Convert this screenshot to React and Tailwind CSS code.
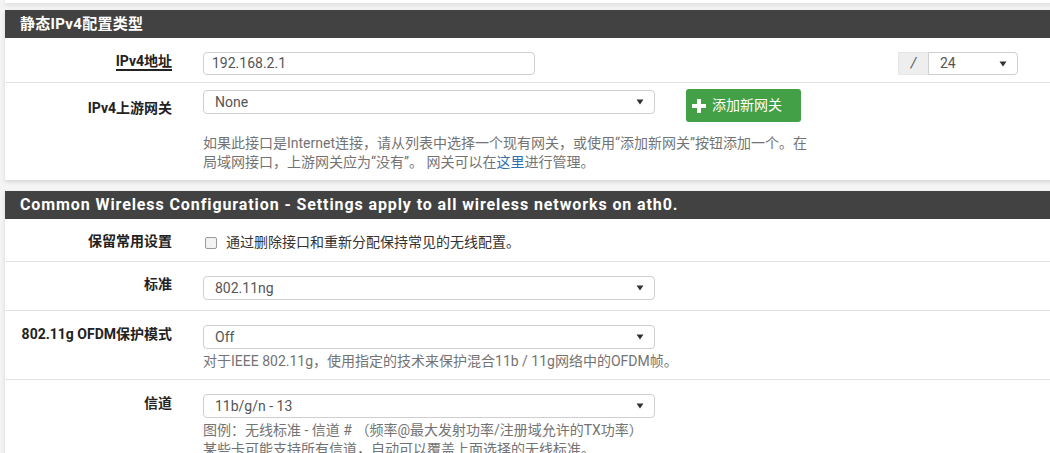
import React from "react";

const font = { fontFamily: '"Roboto", "Noto Sans CJK SC", sans-serif' };

const Caret = () => (
  <svg width="8" height="6" viewBox="0 0 8 6" className="shrink-0">
    <path d="M0.5 0.5 L7.5 0.5 L4 5.5 Z" fill="#333" />
  </svg>
);

const Select = ({ value, className }) => (
  <div
    className={`flex h-[24px] items-center justify-between rounded-[4px] border border-[#cfcfcf] bg-white pl-[11px] pr-[10px] text-[14px] text-[#555] ${className}`}
  >
    <span>{value}</span>
    <Caret />
  </div>
);

const Heading = ({ children, className = "" }) => (
  <div
    className={`flex h-[28px] items-center bg-[#424242] pl-[15px] font-bold text-white ${className}`}
  >
    {children}
  </div>
);

const Row = ({ label, labelClass = "", height, last, children }) => (
  <div
    className={`flex ${last ? "" : "border-b border-[#e3e3e3]"}`}
    style={{ height }}
  >
    <div
      className={`w-[183px] shrink-0 pr-[16px] text-right text-[14px] font-bold text-[#222] ${labelClass}`}
    >
      {label}
    </div>
    <div className="flex-1 pl-[15px]">{children}</div>
  </div>
);

const Help = ({ children, className = "" }) => (
  <div className={`text-[14px] leading-[19px] text-[#737373] ${className}`}>
    {children}
  </div>
);

export default function App() {
  return (
    <div
      className="h-[453px] w-[1050px] overflow-hidden bg-[#f4f4f4]"
      style={font}
    >
      <div className="ml-[5px] h-[3px] w-[1070px] bg-white shadow-[0_2px_4px_rgba(0,0,0,0.12)]" />

      <div className="ml-[5px] mt-[7px] w-[1070px] bg-white shadow-[0_2px_4px_rgba(0,0,0,0.12)]">
        <Heading className="text-[15px] tracking-[0.3px]">静态IPv4配置类型</Heading>
        <Row label={<span className="border-b-[2px] border-[#222]">IPv4地址</span>} labelClass="pt-[13px]" height={45}>
          <div className="flex items-start pt-[14px]">
            <div className="flex h-[23px] w-[332px] items-center rounded-[4px] border border-[#cfcfcf] pl-[8px] text-[14px] text-[#555]">
              192.168.2.1
            </div>
            <div className="ml-[363px] flex">
              <div className="flex h-[23px] w-[30px] items-center justify-center border border-r-0 border-[#e6e6e6] bg-[#eeeeee] text-[14px] italic text-[#555]">
                /
              </div>
              <Select value="24" className="!h-[23px] w-[90px] !rounded-l-none" />
            </div>
          </div>
        </Row>
        <Row label="IPv4上游网关" labelClass="pt-[15px]" height={97} last>
          <div className="flex items-start pt-[6px]">
            <Select value="None" className="mt-[1px] w-[452px]" />
            <button className="ml-[31px] flex h-[33px] w-[115px] items-center gap-[6px] rounded-[3px] bg-[#43a047] pl-[6px] text-[14px] text-white">
              <svg width="14" height="14" viewBox="0 0 14 14">
                <path d="M5 0 H9 V5 H14 V9 H9 V14 H5 V9 H0 V5 H5 Z" fill="#fff" />
              </svg>
              添加新网关
            </button>
          </div>
          <Help className="mt-[12px] w-[615px]">
            如果此接口是Internet连接，请从列表中选择一个现有网关，或使用“添加新网关”按钮添加一个。在局域网接口，上游网关应为“没有”。 网关可以在
            <span className="text-[#2f6fad]">这里</span>进行管理。
          </Help>
        </Row>
      </div>

      <div className="ml-[5px] mt-[11px] w-[1070px] bg-white shadow-[0_2px_4px_rgba(0,0,0,0.12)]">
        <Heading className="text-[16px] tracking-[0.9px]">
          Common Wireless Configuration - Settings apply to all wireless networks on ath0.
        </Heading>
        <Row label="保留常用设置" labelClass="pt-[12px]" height={43}>
          <div className="flex items-center gap-[9px] pt-[13px] text-[14px] text-[#333]">
            <span className="ml-[2px] h-[12px] w-[12px] rounded-[2px] border border-[#9a9a9a] bg-[#f3f3f3]" />
            通过删除接口和重新分配保持常见的无线配置。
          </div>
        </Row>
        <Row label="标准" labelClass="pt-[12px]" height={49}>
          <Select value="802.11ng" className="mt-[14px] w-[452px]" />
        </Row>
        <Row label="802.11g OFDM保护模式" labelClass="pt-[13px]" height={69}>
          <Select value="Off" className="mt-[14px] w-[452px]" />
          <Help className="mt-[3px]">
            对于IEEE 802.11g，使用指定的技术来保护混合11b / 11g网络中的OFDM帧。
          </Help>
        </Row>
        <Row label="信道" labelClass="pt-[13px]" height={90} last>
          <Select value="11b/g/n - 13" className="mt-[14px] w-[452px]" />
          <Help className="mt-[3px]">
            图例：无线标准 - 信道 # （频率@最大发射功率/注册域允许的TX功率）
            <br />
            某些卡可能支持所有信道，自动可以覆盖上面选择的无线标准。
          </Help>
        </Row>
      </div>
    </div>
  );
}
